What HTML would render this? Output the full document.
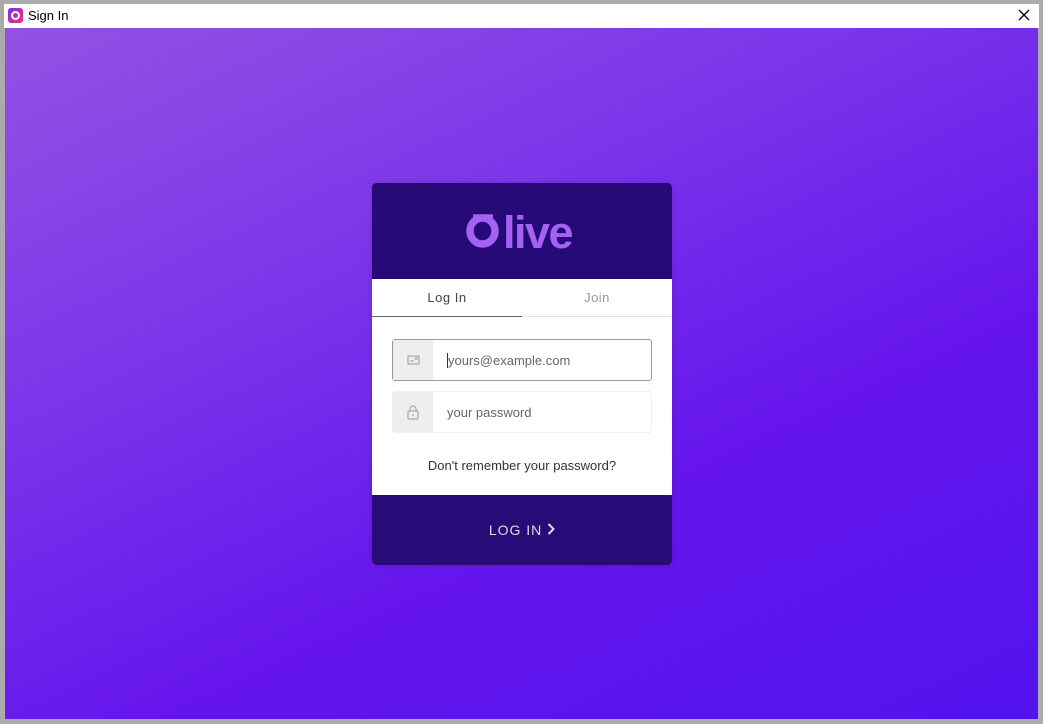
<!DOCTYPE html>
<html><head><meta charset="utf-8"><style>
*{margin:0;padding:0;box-sizing:border-box}
html,body{width:1043px;height:724px;overflow:hidden;background:#ababab;font-family:"Liberation Sans",Arial,sans-serif}
.title{position:absolute;left:4px;top:4px;width:1035px;height:24px;background:#fff}
.title .ic{position:absolute;left:4px;top:4px;width:15px;height:15px;border-radius:3px;background:linear-gradient(135deg,#7a2cf0,#ff2d7a)}
.title .ic:after{content:"";position:absolute;left:3px;top:3px;width:9px;height:9px;box-sizing:border-box;border:2px solid #fff;border-radius:50%}
.title .t{position:absolute;left:24px;top:4px;font-size:13px;color:#000}
.title svg{position:absolute;left:1014px;top:5px}
.bg{position:absolute;left:5px;top:28px;width:1033px;height:691px;background:linear-gradient(155deg,#9352e2 0%,#7a34ea 35%,#6515ec 65%,#5213ee 100%)}
.card{position:absolute;left:372px;top:183px;width:300px;height:382px;border-radius:4px;overflow:hidden;background:#fff;box-shadow:0 0 6px rgba(0,0,0,.15)}
.hd{height:96px;background:#250a78;position:relative}
.logo{position:absolute;left:94px;top:28px;width:34px;height:37px}
.lt{position:absolute;left:131px;top:24px;font-size:45px;font-weight:bold;color:#a561f4;letter-spacing:-1.5px;line-height:52px}
.tabs{height:38px;position:relative;border-bottom:1px solid #e2e2e2}
.tabs div{position:absolute;top:11px;width:150px;text-align:center;font-size:13px;letter-spacing:.5px}
.tabs .a{left:0;color:#444}
.tabs .b{left:150px;color:#999}
.tabs .u{position:absolute;left:0;bottom:-1px;width:150px;height:1px;background:#5d6473}
.f{position:absolute;left:20px;width:260px;height:42px;border:1px solid #eee;border-radius:3px;background:#fff}
.f .i{position:absolute;left:0;top:0;width:40px;height:100%;background:#eee}
.f .p{position:absolute;left:54px;top:13px;font-size:13px;color:#666}
.f1{top:156px;border-color:#999}
.f2{top:208px}
.fg{position:absolute;left:0;right:0;top:275px;text-align:center;font-size:13px;color:#333}
.btn{position:absolute;left:0;bottom:0;width:300px;height:70px;background:#280b78;color:#ddd;text-align:center;line-height:70px;font-size:14px;letter-spacing:1px}
</style></head><body>
<div class="title"><div class="ic"></div><div class="t">Sign In</div><svg width="12" height="12" viewBox="0 0 12 12"><path d="M1 1L11 11M11 1L1 11" stroke="#000" stroke-width="1.3"/></svg></div>
<div class="bg"></div>
<div class="card">
 <div class="hd">
  <svg class="logo" viewBox="0 0 34 37"><ellipse cx="16.5" cy="20" rx="12.5" ry="13" fill="none" stroke="#a561f4" stroke-width="7.5"/><rect x="7" y="3.3" width="20" height="5" fill="#a561f4"/></svg>
  <div class="lt">live</div>
 </div>
 <div class="tabs"><div class="a">Log In</div><div class="b">Join</div><span class="u"></span></div>
 <div class="f f1"><div class="i"><svg width="40" height="40" viewBox="0 0 40 40"><rect x="15" y="16" width="11" height="8" fill="none" stroke="#999"/><line x1="17" y1="21" x2="21" y2="21" stroke="#999"/><rect x="22" y="17.5" width="2.5" height="2" fill="#999"/></svg></div><div class="p" style="border-left:1px solid #333">yours@example.com</div></div>
 <div class="f f2"><div class="i"><svg width="40" height="40" viewBox="0 0 40 40"><rect x="15" y="19" width="10" height="8" rx="1" fill="none" stroke="#999"/><path d="M17 19v-2a3 3 0 0 1 6 0v2" fill="none" stroke="#999"/><line x1="20" y1="22" x2="20" y2="24" stroke="#999"/></svg></div><div class="p">your password</div></div>
 <div class="fg">Don't remember your password?</div>
 <div class="btn">LOG IN <svg width="8" height="12" viewBox="0 0 8 12" style="vertical-align:0"><path d="M1.5 1L6.5 6L1.5 11" fill="none" stroke="#ddd" stroke-width="2"/></svg></div>
</div>
</body></html>
